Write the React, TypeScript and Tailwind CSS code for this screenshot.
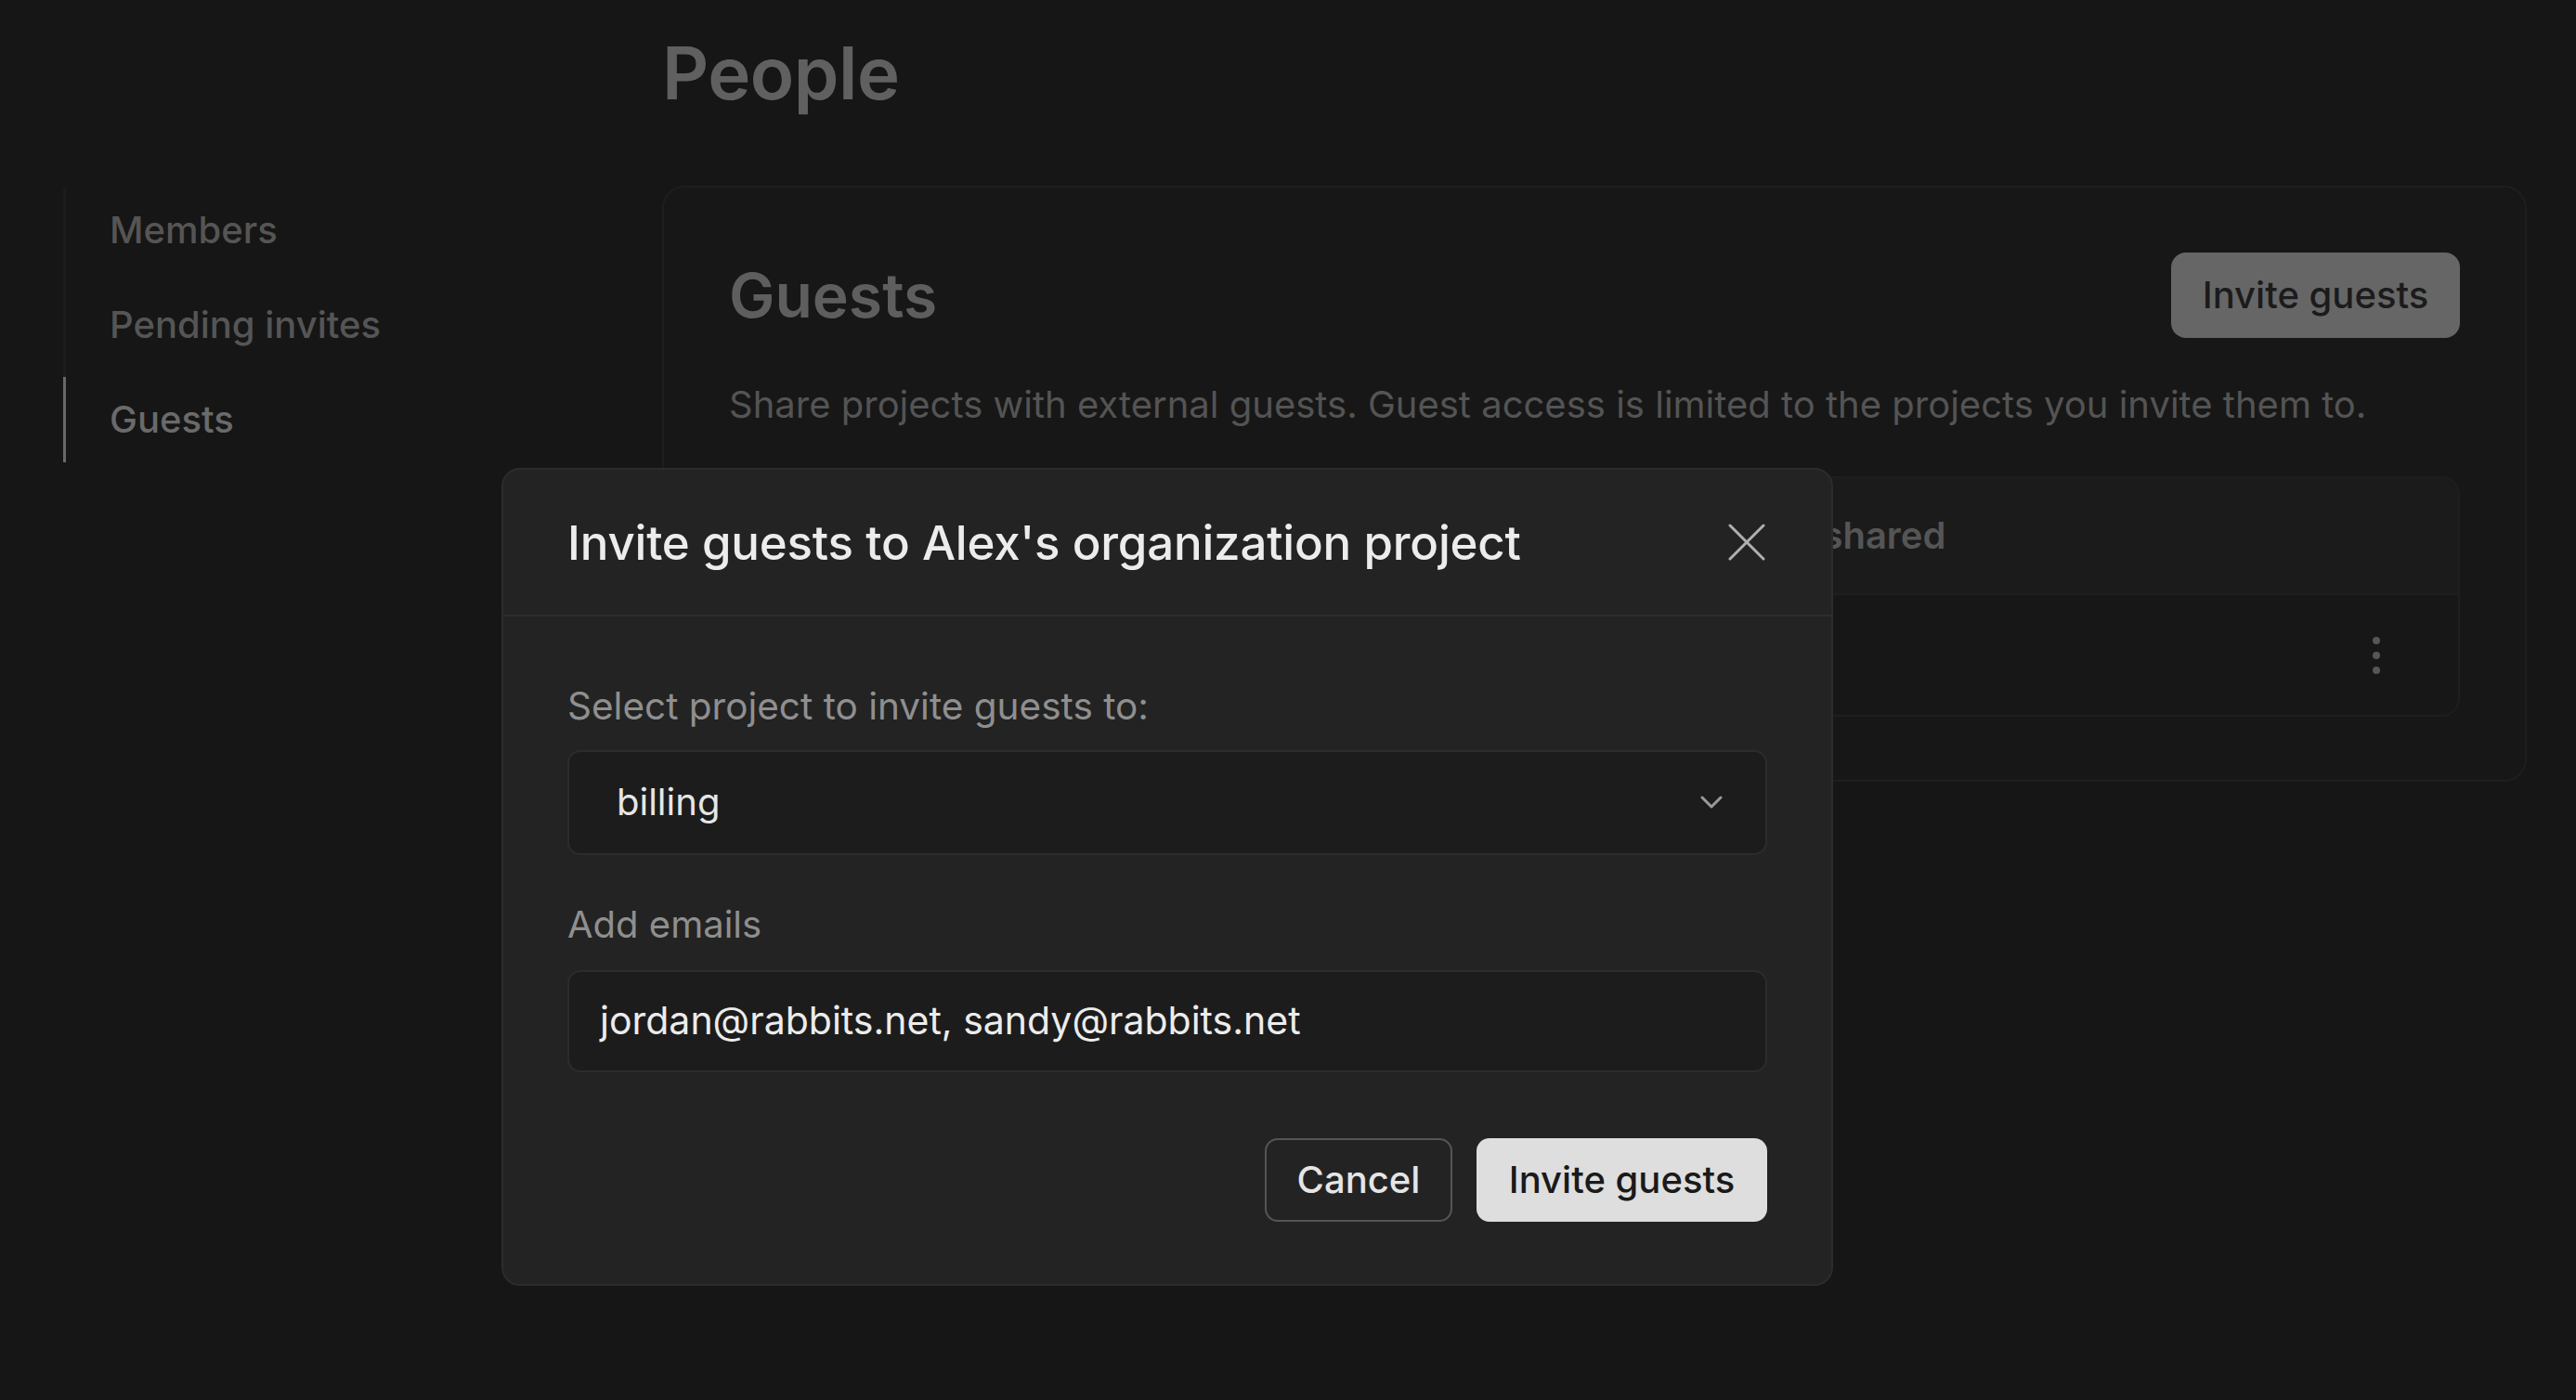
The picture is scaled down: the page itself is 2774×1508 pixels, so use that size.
import React from "react";

function XIcon() {
  return (
    <svg width="40" height="40" viewBox="0 0 40 40" fill="none">
      <path d="M2 2 L38 38 M38 2 L2 38" stroke="#b0b0b0" strokeWidth="3" strokeLinecap="round" />
    </svg>
  );
}

function Chevron() {
  return (
    <svg width="24" height="14" viewBox="0 0 24 14" fill="none">
      <path d="M2 2 L12 12 L22 2" stroke="#9a9a9a" strokeWidth="3" strokeLinecap="round" strokeLinejoin="round" />
    </svg>
  );
}

function Kebab() {
  return (
    <div className="flex flex-col items-center gap-[8px]">
      <div className="w-[8px] h-[8px] rounded-full bg-[#565656]" />
      <div className="w-[8px] h-[8px] rounded-full bg-[#565656]" />
      <div className="w-[8px] h-[8px] rounded-full bg-[#565656]" />
    </div>
  );
}

export default function App() {
  return (
    <div className="relative w-full h-[1508px] bg-[#161616] overflow-hidden font-[Inter,sans-serif]">
      {/* page */}
      <div className="flex pl-[68px] pr-[53px]">
        <aside className="w-[645px] shrink-0 pt-[202px]">
          <nav className="flex flex-col gap-[10px] border-l-[3px] border-[#1c1c1c] w-[420px]">
            <div className="h-[92px] flex items-center pl-[47px] text-[40px] font-medium text-[#555555] whitespace-nowrap">Members</div>
            <div className="h-[92px] flex items-center pl-[47px] text-[40px] font-medium text-[#555555] whitespace-nowrap">Pending invites</div>
            <div className="h-[92px] flex items-center pl-[47px] -ml-[3px] border-l-[3px] border-[#686868] text-[40px] font-medium text-[#6a6a6a] whitespace-nowrap">Guests</div>
          </nav>
        </aside>
        <main className="flex-1 pt-[40px]">
          <h1 className="text-[78px] leading-none font-semibold text-[#606060] tracking-[-0.5px]">People</h1>
          <section className="mt-[82px] border-2 border-[#1e1e1e] bg-[#171717] rounded-[24px] px-[70px] pt-[70px] pb-[68px]">
            <div className="flex items-center justify-between h-[92px]">
              <h2 className="text-[66px] leading-none font-semibold text-[#5e5e5e]">Guests</h2>
              <button className="h-[92px] w-[311px] rounded-[16px] bg-[#666666] text-[40px] font-medium text-[#1b1b1b]">Invite guests</button>
            </div>
            <p className="mt-[42px] text-[40px] leading-[60px] text-[#545454]">
              Share projects with external guests. Guest access is limited to the projects you invite them to.
            </p>
            <div className="mt-[47px] border-2 border-[#1e1e1e] rounded-[20px] overflow-hidden">
              <div className="h-[126px] bg-[#1b1b1b] border-b-2 border-[#1f1f1f] flex items-center pl-[1007px] text-[40px] font-semibold text-[#555555]">
                <div className="whitespace-nowrap">Projects shared</div>
              </div>
              <div className="h-[129px] flex items-center justify-end pr-[84px]">
                <Kebab />
              </div>
            </div>
          </section>
        </main>
      </div>

      {/* modal */}
      <div className="absolute left-[540px] top-[504px] w-[1434px] border-2 border-[#2c2c2c] bg-[#232323] rounded-[20px]">
        <div className="h-[158px] border-b-2 border-[#2e2e2e] flex items-center justify-between pl-[69px] pr-[71px]">
          <h3 className="text-[51px] leading-none font-medium text-[#ececec] tracking-[-0.2px]">Invite guests to Alex's organization project</h3>
          <XIcon />
        </div>
        <div className="px-[69px] pt-[77px] pb-[67px]">
          <label className="block text-[40.5px] leading-none text-[#8f8f8f]">Select project to invite guests to:</label>
          <div className="mt-[26px] h-[113px] border-2 border-[#2c2c2c] bg-[#1c1c1c] rounded-[14px] flex items-center justify-between pl-[51px] pr-[46px]">
            <span className="text-[40px] text-[#e6e6e6]">billing</span>
            <Chevron />
          </div>
          <label className="block mt-[55px] text-[40px] leading-none text-[#8f8f8f]">Add emails</label>
          <div className="mt-[29px] h-[110px] border-2 border-[#2c2c2c] bg-[#1c1c1c] rounded-[14px] flex items-center pl-[33px]">
            <span className="text-[41px] text-[#ececec]">jordan@rabbits.net, sandy@rabbits.net</span>
          </div>
          <div className="mt-[71px] flex justify-end gap-[26px]">
            <button className="h-[90px] w-[202px] border-2 border-[#555555] rounded-[14px] text-[40px] font-medium text-[#e5e5e5]">Cancel</button>
            <button className="h-[90px] w-[313px] bg-[#dedede] rounded-[14px] text-[40px] font-medium text-[#1a1a1a]">Invite guests</button>
          </div>
        </div>
      </div>
    </div>
  );
}
